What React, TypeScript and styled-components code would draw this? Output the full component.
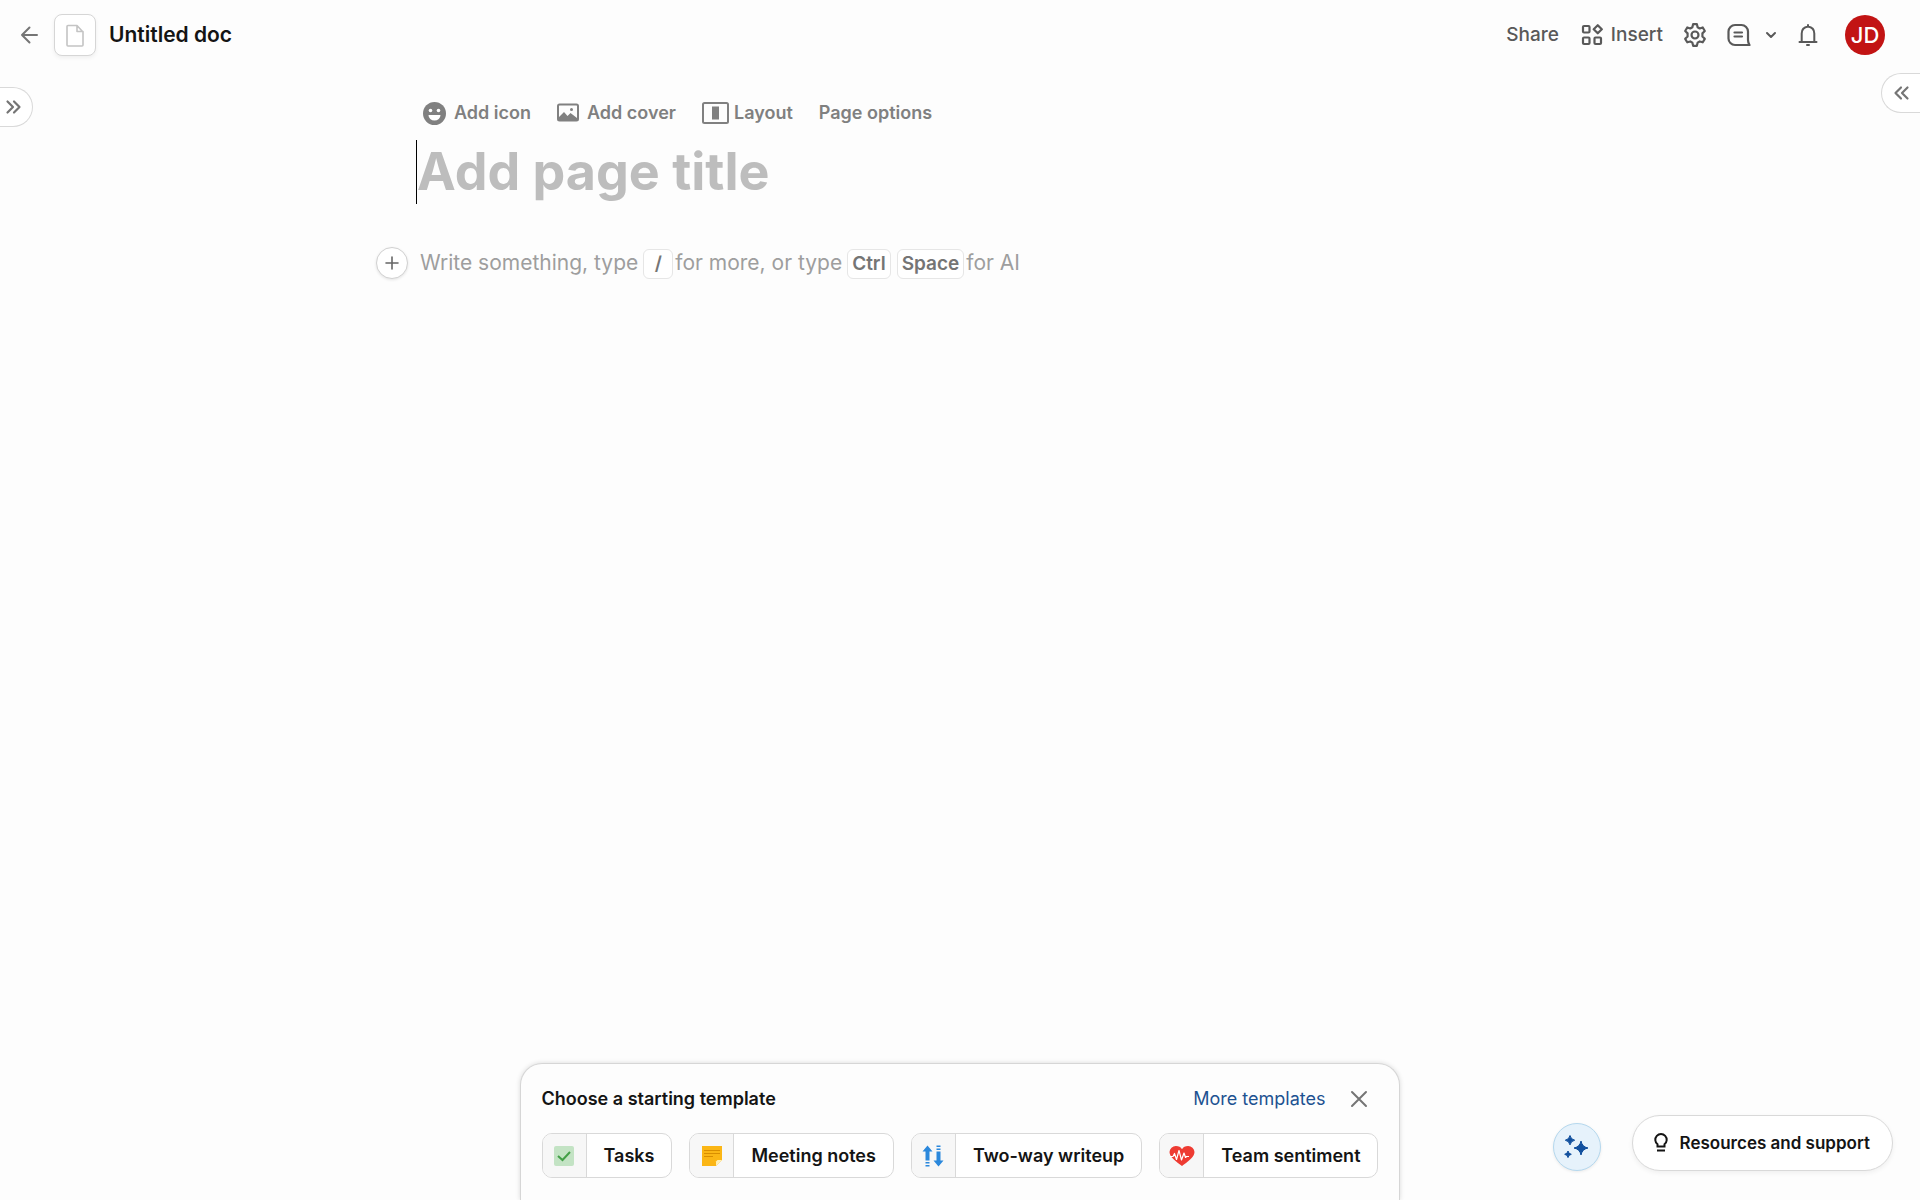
import React, { useState } from "react";
import styled, { createGlobalStyle } from "styled-components";

const GlobalStyle = createGlobalStyle`
  *, *::before, *::after { box-sizing: border-box; }
  body {
    margin: 0;
    background: #fdfdfd;
    color: #141414;
    font-family: Inter, "Liberation Sans", sans-serif;
  }
  button, input { font: inherit; color: inherit; }
`;

const Page = styled.div`
  display: flex;
  flex-direction: column;
  min-height: 100vh;
`;

const Header = styled.header`
  display: flex;
  align-items: center;
  justify-content: space-between;
  height: 70px;
  padding: 0 35px 0 16px;
`;

const HeaderGroup = styled.div<{ $gap: number }>`
  display: flex;
  align-items: center;
  gap: ${(p) => p.$gap}px;
`;

const PlainButton = styled.button`
  display: inline-flex;
  align-items: center;
  gap: 8px;
  padding: 0;
  border: 0;
  background: none;
  cursor: pointer;
`;

const ActionButton = styled(PlainButton)`
  color: #595959;
  font-size: 19px;
  line-height: 24px;
  font-weight: 500;
`;

const BackButton = styled(PlainButton)`
  color: #757575;
  margin-right: 10px;
`;

const DocIcon = styled(PlainButton)`
  justify-content: center;
  width: 42px;
  height: 42px;
  border: 1px solid #d6d6d6;
  border-radius: 8px;
  background: #fff;
  color: #c4c4c4;
  box-shadow: 0 2px 4px rgba(0, 0, 0, 0.06);
`;

const DocName = styled.h1`
  margin: 0 0 0 13px;
  font-size: 21px;
  line-height: 28px;
  font-weight: 600;
`;

const Avatar = styled(PlainButton)`
  justify-content: center;
  width: 40px;
  height: 40px;
  margin-left: 6px;
  border-radius: 50%;
  background: #c21414;
  color: #fff;
  font-size: 22px;
  font-weight: 500;
`;

const Main = styled.main`
  flex: 1;
  display: flex;
  justify-content: space-between;
  align-items: flex-start;
`;

const SideTab = styled.button<{ $side: "left" | "right" }>`
  display: flex;
  align-items: center;
  flex: none;
  height: 40px;
  width: ${(p) => (p.$side === "left" ? 33 : 39)}px;
  margin-top: ${(p) => (p.$side === "left" ? 17 : 3)}px;
  padding: 0 0 0 ${(p) => (p.$side === "left" ? 5 : 11)}px;
  border: 1px solid #d9d9d9;
  border-width: ${(p) => (p.$side === "left" ? "1px 1px 1px 0" : "1px 0 1px 1px")};
  border-radius: ${(p) => (p.$side === "left" ? "0 20px 20px 0" : "20px 0 0 20px")};
  background: #fff;
  color: #757575;
  cursor: pointer;
`;

const Doc = styled.article`
  flex: 0 1 1162px;
  padding-top: 29px;
`;

const DocTools = styled.div`
  display: flex;
  align-items: center;
  gap: 26px;
  height: 28px;
  padding-left: 47px;
`;

const DocTool = styled(PlainButton)<{ $gap?: number }>`
  gap: ${(p) => p.$gap ?? 8}px;
  color: #808080;
  font-size: 18px;
  line-height: 24px;
  font-weight: 600;
`;

const TitleInput = styled.input`
  display: block;
  width: calc(100% - 40px);
  height: 64px;
  margin: 13px 0 0 40px;
  padding: 0 0 2px;
  border: 0;
  border-left: 1px solid #000;
  outline: 0;
  background: none;
  font-size: 52px;
  font-weight: 700;
  &::placeholder { color: #bdbdbd; opacity: 1; }
`;

const BodyLine = styled.div`
  display: flex;
  align-items: center;
  height: 34px;
  margin-top: 42px;
`;

const AddButton = styled(PlainButton)`
  justify-content: center;
  width: 32px;
  height: 32px;
  margin-right: 12px;
  border: 1px solid #d1d1d1;
  border-radius: 50%;
  background: #fff;
  color: #666;
  box-shadow: 0 1px 3px rgba(0, 0, 0, 0.1);
`;

const Hint = styled.p`
  display: flex;
  align-items: center;
  margin: 0;
  color: #9e9e9e;
  font-size: 21px;
  line-height: 28px;
`;

const Keys = styled.span`
  display: flex;
  gap: 6px;
  margin: 2px 2px 0 5px;
`;

const Key = styled.kbd`
  display: inline-flex;
  align-items: center;
  justify-content: center;
  min-width: 30px;
  height: 30px;
  padding: 0 4px;
  border: 1px solid #e6e6e6;
  border-radius: 6px;
  background: #fff;
  color: #757575;
  font-family: inherit;
  font-size: 19px;
  font-weight: 600;
`;

const Footer = styled.footer`
  display: grid;
  grid-template-columns: 1fr auto 1fr;
  align-items: end;
`;

const TemplatePanel = styled.section`
  grid-column: 2;
  padding: 19px 21px 22px;
  border: 1px solid #d6d6d6;
  border-bottom: 0;
  border-radius: 22px 22px 0 0;
  background: #fdfdfd;
  box-shadow: 0 0 5px rgba(0, 0, 0, 0.14);
`;

const PanelHead = styled.div`
  display: flex;
  align-items: center;
  gap: 25px;
  height: 32px;
  margin-bottom: 18px;
  padding-right: 10px;
`;

const PanelTitle = styled.h2`
  flex: 1;
  margin: 0;
  font-size: 18px;
  line-height: 24px;
  font-weight: 600;
`;

const MoreLink = styled.a`
  color: #1d5291;
  font-size: 18px;
  line-height: 24px;
  text-decoration: none;
`;

const CloseButton = styled(PlainButton)`
  color: #757575;
`;

const TemplateList = styled.div`
  display: flex;
  gap: 17px;
`;

const Template = styled.button`
  display: flex;
  align-items: center;
  height: 45px;
  padding: 0;
  overflow: hidden;
  border: 1px solid #d9d9d9;
  border-radius: 10px;
  background: #fff;
  font-size: 18px;
  font-weight: 600;
  cursor: pointer;
`;

const TemplateIcon = styled.span`
  display: flex;
  align-items: center;
  justify-content: center;
  width: 44px;
  height: 100%;
  border-right: 1px solid #d9d9d9;
  background: #f7f7f7;
`;

const TemplateName = styled.span`
  padding: 0 17px;
`;

const Floating = styled.div`
  display: flex;
  align-items: flex-end;
  justify-content: flex-end;
  gap: 31px;
  padding: 0 27px 29px 0;
`;

const AiButton = styled(PlainButton)`
  justify-content: center;
  width: 48px;
  height: 48px;
  border: 1px solid #b5d8ee;
  border-radius: 50%;
  background: #e6f2fb;
  box-shadow: 0 1px 3px rgba(0, 0, 0, 0.08);
`;

const SupportButton = styled(PlainButton)`
  gap: 9px;
  height: 56px;
  padding: 0 22px 0 18px;
  border: 1px solid #d9d9d9;
  border-radius: 28px;
  background: #fff;
  font-size: 17px;
  font-weight: 600;
  box-shadow: 0 2px 5px rgba(0, 0, 0, 0.06);
`;

type StrokeProps = { w: number; h: number; sw?: number; round?: boolean; children: React.ReactNode };
const Stroke = ({ w, h, sw = 2, round = true, children }: StrokeProps) => (
  <svg width={w} height={h} viewBox={`0 0 ${w} ${h}`} fill="none" stroke="currentColor" strokeWidth={sw}
    strokeLinecap={round ? "round" : "butt"} strokeLinejoin={round ? "round" : "miter"} aria-hidden="true">
    {children}
  </svg>
);

const BackIcon = () => (
  <Stroke w={28} h={24}><path d="M21 12H6M13.5 4.5L6 12l7.500 7.500" /></Stroke>
);
const FileIcon = () => (
  <Stroke w={20} h={24} sw={1.6}><path d="M2 3.500a1 1 0 0 1 1-1h9l6 6.500v13a1 1 0 0 1-1 1H3a1 1 0 0 1-1-1zM12 2.500v6h6" /></Stroke>
);
const ChevronsRight = () => (
  <Stroke w={18} h={16} sw={2.2}><path d="M2.500 2.500L8 8l-5.500 5.500M9 2.500L14.500 8 9 13.500" /></Stroke>
);
const ChevronsLeft = () => (
  <Stroke w={18} h={16} sw={2.2}><path d="M8 2.500L2.500 8 8 13.500M14.500 2.500L9 8l5.500 5.500" /></Stroke>
);
const BlocksIcon = () => (
  <Stroke w={22} h={22} sw={2.2}>
    <rect x="2" y="2" width="6.500" height="6.500" rx="1" />
    <rect x="2" y="13.500" width="6.500" height="6.500" rx="1" />
    <rect x="13.500" y="13.500" width="6.500" height="6.500" rx="1" />
    <path d="M16.750 1.200L20.800 5.250 16.750 9.300 12.700 5.250z" />
  </Stroke>
);
const GearIcon = () => (
  <svg width="24" height="24" viewBox="1 1 22 22" fill="none" stroke="currentColor" strokeWidth="2" strokeLinejoin="round" aria-hidden="true">
    <path d="M10.300 2h3.400l.7 2.900 1.900 1.100 2.800-.9 1.900 3.300-2.200 2.100v2.800l2.200 2.200-1.900 3.200-2.800-.8-1.900 1.100-.7 2.900h-3.400l-.7-2.900-1.900-1.100-2.800.8L3 15.500l2.200-2.200v-2.800L3 8.400l1.900-3.300 2.800.9 1.900-1.100z" />
    <circle cx="12" cy="12" r="3.200" />
  </svg>
);
const CommentIcon = () => (
  <Stroke w={24} h={24} sw={2.2}>
    <path d="M8 2h6.500A6.500 6.500 0 0 1 21 8.500V17c0 2 .5 3.500 1.500 5H8A6.500 6.500 0 0 1 1.500 15.500v-7A6.500 6.500 0 0 1 8 2zM7.500 9.500h7.500M7.500 13.500h7.500" />
  </Stroke>
);
const ChevronDown = () => (
  <Stroke w={12} h={10}><path d="M2 3l4 4 4-4" /></Stroke>
);
const BellIcon = () => (
  <Stroke w={22} h={24}>
    <path d="M2.500 19h17M4.700 19v-8.500C4.700 6.500 7.500 4 11 3.500c3.500.5 6.300 3 6.300 7V19M11 2v1.500M10 22h2" />
  </Stroke>
);
const SmileIcon = () => (
  <svg width="23" height="23" viewBox="0 0 23 23" aria-hidden="true">
    <circle cx="11.500" cy="11.500" r="11.500" fill="#808080" />
    <circle cx="7.500" cy="8.500" r="1.800" fill="#fff" />
    <circle cx="15.500" cy="8.500" r="1.800" fill="#fff" />
    <path d="M5.500 13h12a6 5.500 0 0 1-12 0z" fill="#fff" />
  </svg>
);
const ImageIcon = () => (
  <svg width="22" height="20" viewBox="0 0 22 20" fill="none" aria-hidden="true">
    <rect x="1" y="1.500" width="20" height="16" rx="1.500" stroke="#808080" strokeWidth="2" />
    <path d="M2 14L7 9l3.500 4 3-3 6.500 5v2.500H2z" fill="#808080" />
    <circle cx="14.500" cy="6.500" r="1.500" fill="#808080" />
  </svg>
);
const LayoutIcon = () => (
  <svg width="27" height="23" viewBox="0 0 27 23" fill="none" aria-hidden="true">
    <rect x="1" y="1" width="25" height="20" rx="1.500" stroke="#808080" strokeWidth="2" />
    <rect x="10" y="4.500" width="7" height="13" fill="#808080" />
  </svg>
);
const PlusIcon = () => (
  <Stroke w={16} h={16} sw={1.600}><path d="M8 2v12M2 8h12" /></Stroke>
);
const CloseIcon = () => (
  <Stroke w={18} h={18}><path d="M2 2l14 14M16 2L2 16" /></Stroke>
);
const BulbIcon = () => (
  <Stroke w={20} h={22} round={false}>
    <path d="M6.500 14.500v-2.200A5.700 5.700 0 1 1 13.500 12.300v2.200zM6 18.500h8" />
  </Stroke>
);
const SparkleIcon = () => (
  <svg width="26" height="26" viewBox="0 0 26 26" fill="#12509e" stroke="#12509e" strokeLinejoin="round" aria-hidden="true">
    <path d="M17 7q1.200 5.800 7 7-5.800 1.200-7 7-1.200-5.800-7-7 5.800-1.200 7-7z" />
    <path d="M6 1.500q.8 3.900 4.700 4.700Q6.800 7 6 10.900 5.200 7 1.300 6.200 5.200 5.400 6 1.500z" />
    <path d="M4 17q.5 2.800 3.300 3.300Q4.500 20.800 4 23.600q-.5-2.800-3.300-3.300Q3.500 19.800 4 17z" />
  </svg>
);

const TasksIcon = () => (
  <svg width="20" height="20" viewBox="0 0 20 20" fill="none" aria-hidden="true">
    <rect width="20" height="20" rx="2" fill="#c3e3c4" />
    <path d="M4 10l4.500 4L16 6" stroke="#43a047" strokeWidth="2" />
  </svg>
);
const NotesIcon = () => (
  <svg width="20" height="20" viewBox="0 0 20 20" fill="none" aria-hidden="true">
    <path d="M0 0h20v14l-6 6H0z" fill="#fbb615" />
    <path d="M20 14l-6 6v-4.500l1.500-1.500z" fill="#fff0b8" />
    <path d="M2 4.500h16M2 7.500h16M2 10.500h9" stroke="#d98e00" strokeWidth="1" />
  </svg>
);
const ArrowsIcon = () => (
  <svg width="22" height="22" viewBox="0 0 22 22" fill="#2b88dc" aria-hidden="true">
    <path d="M5.500.500l5 6H7.500v9h-4v-9h-3zM3.500 17h4v1.500h-4zM3.500 20h4v1.500h-4z" />
    <path d="M16.500 21.500l-5-6h3v-9h4v9h3zM14.500 3.500h4V5h-4zM14.500.500h4V2h-4z" />
  </svg>
);
const HeartIcon = () => (
  <svg width="26" height="22" viewBox="0 0 26 22" fill="none" aria-hidden="true">
    <path d="M13 21C8 17 .500 12.500.500 7A6.300 6.300 0 0 1 7 1c2.700 0 4.800 1 6 3.200C14.200 2 16.300 1 19 1a6.300 6.300 0 0 1 6.500 6c0 5.500-7.500 10-12.500 14z" fill="#ee3b32" />
    <path d="M1 11.500h3l1.500-3 2 6 2.500-9 2.500 9.500L15 8l1.500 4.500 1-1H20" stroke="#fff" strokeWidth="1.200" strokeLinejoin="round" />
  </svg>
);

const templates = [
  { name: "Tasks", icon: <TasksIcon /> },
  { name: "Meeting notes", icon: <NotesIcon /> },
  { name: "Two-way writeup", icon: <ArrowsIcon /> },
  { name: "Team sentiment", icon: <HeartIcon /> },
];

export default function App() {
  const [title, setTitle] = useState("");
  return (
    <Page>
      <GlobalStyle />
      <Header>
        <HeaderGroup $gap={0}>
          <BackButton aria-label="Back"><BackIcon /></BackButton>
          <DocIcon aria-label="Document icon"><FileIcon /></DocIcon>
          <DocName>Untitled doc</DocName>
        </HeaderGroup>
        <HeaderGroup $gap={20}>
          <HeaderGroup $gap={22}>
            <ActionButton>Share</ActionButton>
            <ActionButton><BlocksIcon />Insert</ActionButton>
          </HeaderGroup>
          <ActionButton aria-label="Settings"><GearIcon /></ActionButton>
          <HeaderGroup $gap={14}>
            <ActionButton aria-label="Comments"><CommentIcon /></ActionButton>
            <ActionButton aria-label="Comment options"><ChevronDown /></ActionButton>
          </HeaderGroup>
          <ActionButton aria-label="Notifications"><BellIcon /></ActionButton>
          <Avatar aria-label="Account">JD</Avatar>
        </HeaderGroup>
      </Header>

      <Main>
        <SideTab $side="left" aria-label="Show pages"><ChevronsRight /></SideTab>
        <Doc>
          <DocTools>
            <DocTool><SmileIcon />Add icon</DocTool>
            <DocTool><ImageIcon />Add cover</DocTool>
            <DocTool $gap={5}><LayoutIcon />Layout</DocTool>
            <DocTool>Page options</DocTool>
          </DocTools>
          <TitleInput aria-label="Page title" placeholder="Add page title" value={title}
            onChange={(e) => setTitle(e.target.value)} />
          <BodyLine>
            <AddButton aria-label="Add block"><PlusIcon /></AddButton>
            <Hint>
              <span>Write something, type</span>
              <Keys><Key>/</Key></Keys>
              <span>for more, or type</span>
              <Keys><Key>Ctrl</Key><Key>Space</Key></Keys>
              <span>for AI</span>
            </Hint>
          </BodyLine>
        </Doc>
        <SideTab $side="right" aria-label="Show side panel"><ChevronsLeft /></SideTab>
      </Main>

      <Footer>
        <TemplatePanel>
          <PanelHead>
            <PanelTitle>Choose a starting template</PanelTitle>
            <MoreLink href="#templates">More templates</MoreLink>
            <CloseButton aria-label="Close"><CloseIcon /></CloseButton>
          </PanelHead>
          <TemplateList>
            {templates.map((t) => (
              <Template key={t.name}>
                <TemplateIcon>{t.icon}</TemplateIcon>
                <TemplateName>{t.name}</TemplateName>
              </Template>
            ))}
          </TemplateList>
        </TemplatePanel>
        <Floating>
          <AiButton aria-label="AI assistant"><SparkleIcon /></AiButton>
          <SupportButton><BulbIcon />Resources and support</SupportButton>
        </Floating>
      </Footer>
    </Page>
  );
}
